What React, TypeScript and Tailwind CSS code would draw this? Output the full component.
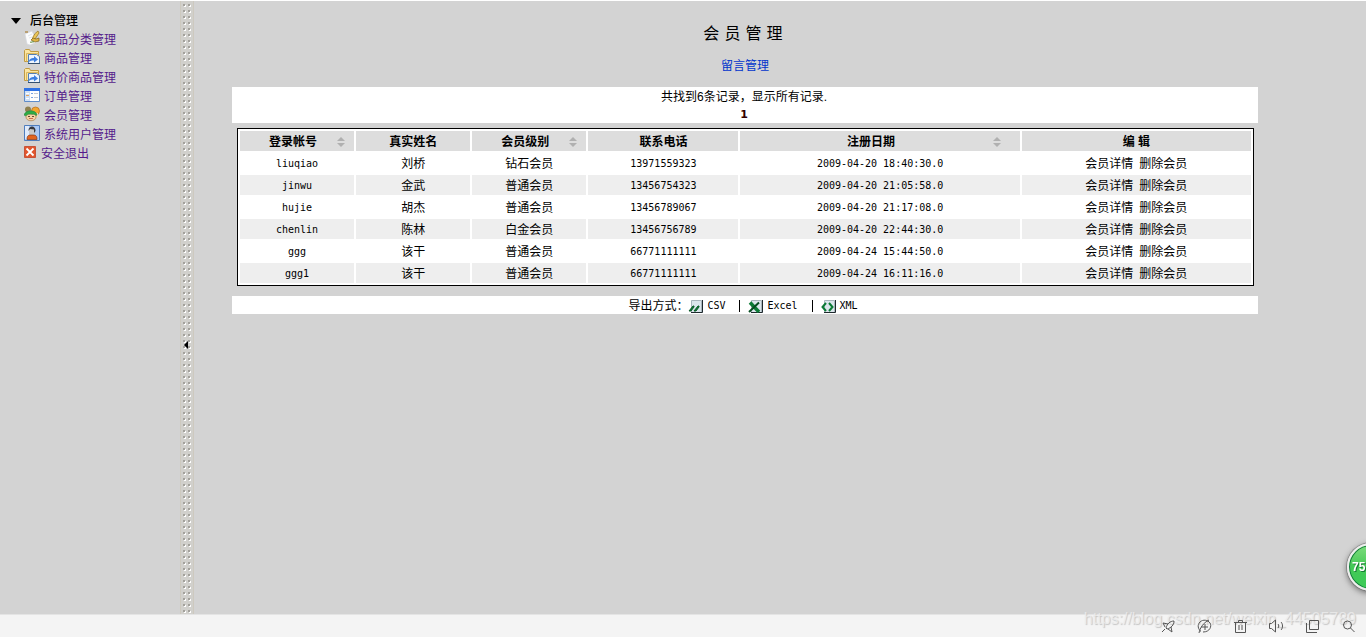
import { ReactNode } from 'react'

const members = [
  { account: 'liuqiao', name: '刘桥', level: '钻石会员', phone: '13971559323', date: '2009-04-20 18:40:30.0' },
  { account: 'jinwu', name: '金武', level: '普通会员', phone: '13456754323', date: '2009-04-20 21:05:58.0' },
  { account: 'hujie', name: '胡杰', level: '普通会员', phone: '13456789067', date: '2009-04-20 21:17:08.0' },
  { account: 'chenlin', name: '陈林', level: '白金会员', phone: '13456756789', date: '2009-04-20 22:44:30.0' },
  { account: 'ggg', name: '该干', level: '普通会员', phone: '66771111111', date: '2009-04-24 15:44:50.0' },
  { account: 'ggg1', name: '该干', level: '普通会员', phone: '66771111111', date: '2009-04-24 16:11:16.0' },
]

const columns = [
  { label: '登录帐号', width: 'w-[11.4%]', sort: 'pr-[9px]' },
  { label: '真实姓名', width: 'w-[11.4%]' },
  { label: '会员级别', width: 'w-[11.4%]', sort: 'pr-[9px]' },
  { label: '联系电话', width: 'w-[15%]' },
  { label: '注册日期', width: 'w-[27.9%]', sort: 'pr-[19px]' },
  { label: '编 辑', width: 'w-[22.9%]' },
]

const mono = "font-['DejaVu_Sans_Mono','Noto_Sans_CJK_SC',monospace] text-[10px]"
const cell = 'h-5 p-0 pt-[2px]'

function NoteIcon() {
  return (
    <svg width="16" height="16" viewBox="0 0 16 16">
      <path d="M1 4 8 1l5 11-7 3-3-1z" fill="#fcfcfc" stroke="#d5d9df" strokeWidth=".7" />
      <path d="M4 6l4-2M5 8l3-1" stroke="#dfe4ec" />
      <path d="M1 1h3v2H1z" fill="#b9a074" />
      <path d="M14 1c-2 1-4 4-5 6l-1 3 3-1 4-6z" fill="#ecc75a" stroke="#9a7a28" strokeWidth=".8" />
      <path d="M7 10l2-2 3 1 3-1v3l-4 1z" fill="#e0b545" stroke="#80631c" strokeWidth=".7" />
      <path d="M6 12c1 1 3-1 4 0" stroke="#5c8a3a" fill="none" />
    </svg>
  )
}

function FolderIcon() {
  return (
    <svg width="16" height="16" viewBox="0 0 16 16">
      <path d="M.5 12.500v-11l1-1h4l1 2h8v10z" fill="#fbe6a2" stroke="#c09a42" />
      <path d="M2.500 12.500v-8h12" fill="none" stroke="#d9b65e" />
      <path d="M4.500 5.500h8l3 2v7h-11z" fill="#eef5fd" stroke="#5480b5" />
      <path d="M5 13c0-3 2-4 5-4V7l4 3.500-4 3v-2c-2 0-4 0-5 1.500z" fill="#3c7fe0" />
      <path d="M4 14.500h12" stroke="#34506f" />
    </svg>
  )
}

function OrderIcon() {
  return (
    <svg width="16" height="14" viewBox="0 0 16 14">
      <path d="M.5.500h15v13H.5z" fill="#fff" stroke="#5f8cc9" />
      <path d="M0 0h16v3H0z" fill="#2f72e4" />
      <path d="M1 3h5v10H1z" fill="#cfe0f5" />
      <path d="M2 5.500h3M2 10.500h3" stroke="#fff" />
      <path d="M2 7.500h3" stroke="#e2a45a" />
      <path d="M7 5.500h2M7 9.500h2" stroke="#7ba4e4" />
      <path d="M10 5.500h4M10 9.500h4" stroke="#c4c9d2" />
    </svg>
  )
}

function MembersIcon() {
  return (
    <svg width="16" height="16" viewBox="0 0 16 16">
      <circle cx="11.500" cy="5" r="4" fill="#f3a52f" stroke="#b56a19" strokeWidth=".7" />
      <circle cx="4" cy="3.500" r="3" fill="#8f8150" />
      <path d="M10 7h4v3c0 2-2 2-4 1z" fill="#f6d7ad" />
      <path d="M2 8h10v3c0 5-10 5-10 0z" fill="#f5d3a5" stroke="#a87a4b" strokeWidth=".7" />
      <path d="M0 9c1-5 12-6 13 0-1 1-2 0-3-1-2 1-5-1-7 1-1 1-2 1-3 0z" fill="#2fac46" stroke="#25803a" strokeWidth=".5" />
      <path d="M4 10.500h2M8 10.500h2" stroke="#664a32" />
      <path d="M5 12.500h4" stroke="#c96a50" />
    </svg>
  )
}

function UserIcon() {
  return (
    <svg width="16" height="16" viewBox="0 0 16 16">
      <path d="M.5.500h15v15H.5z" fill="#a9c8f5" stroke="#4f7dbd" />
      <path d="M1 1h4v13H1z" fill="#dfeafb" />
      <path d="M5 4h6v4c-1 3-5 3-6 0z" fill="#c9c9c9" />
      <path d="M4.500 6C4 0 12 0 11.500 6L10 8V4.500L6 4z" fill="#36363b" />
      <path d="M3 14.500C3 10 5 10 8 10s5 0 5 4.500z" fill="#e2641f" stroke="#8b3712" strokeWidth=".7" />
    </svg>
  )
}

function ExitIcon() {
  return (
    <svg width="12" height="12" viewBox="0 0 12 12">
      <path d="M.5.500h11v11H.5z" fill="#e2562d" stroke="#c65238" />
      <path d="M2.500 2.500l7 7M9.500 2.500l-7 7" stroke="#fff" strokeWidth="1.800" />
    </svg>
  )
}

const menu = [
  { label: '商品分类管理', icon: <NoteIcon />, gap: 'gap-1' },
  { label: '商品管理', icon: <FolderIcon />, gap: 'gap-1' },
  { label: '特价商品管理', icon: <FolderIcon />, gap: 'gap-1' },
  { label: '订单管理', icon: <OrderIcon />, gap: 'gap-1' },
  { label: '会员管理', icon: <MembersIcon />, gap: 'gap-1' },
  { label: '系统用户管理', icon: <UserIcon />, gap: 'gap-1' },
  { label: '安全退出', icon: <ExitIcon />, gap: 'gap-[5px]' },
]

function Sidebar() {
  return (
    <aside className="w-[180px] shrink-0 pt-[10px]">
      <div className="flex h-[19px] items-center gap-[9px] pl-[11px] text-black">
        <svg width="10" height="6" viewBox="0 0 10 6"><path d="M0 0h10L5 6z" /></svg>
        <span className="font-medium">后台管理</span>
      </div>
      <nav className="pl-6">
        {menu.map(item => (
          <a key={item.label} href="#" className={`flex h-[19px] items-center text-[#551a8b] ${item.gap}`}>
            <span className="-mt-1">{item.icon}</span>
            <span>{item.label}</span>
          </a>
        ))}
      </nav>
    </aside>
  )
}

function Splitter() {
  return (
    <div className="relative w-[14px] shrink-0 border-x border-[#cdc9bf] bg-[#d1d0cc]">
      <svg className="absolute inset-0 h-full w-full">
        <defs>
          <pattern id="dots" width="5" height="6" x="2" y="3" patternUnits="userSpaceOnUse">
            <path d="M1 1h2v2H1z" fill="#fff" />
            <path d="M0 0h2v2H0z" fill="#a3a19b" />
          </pattern>
        </defs>
        <rect x="2" width="9" height="100%" fill="url(#dots)" />
      </svg>
      <button aria-label="收起菜单" className="absolute top-[340px] left-[2px] h-2 w-[6px]">
        <svg width="6" height="8" viewBox="0 0 6 8"><path d="M5 0v8L1 4z" /></svg>
      </button>
    </div>
  )
}

function SortIcon() {
  return (
    <svg width="8" height="10" viewBox="0 0 8 10" fill="#b0b0b0">
      <path d="M0 4h8L4 0zM0 6h8l-4 4z" />
    </svg>
  )
}

function MemberTable() {
  return (
    <table className="w-full table-fixed border-separate border-spacing-[2px] border border-black bg-white text-center">
      <colgroup>
        {columns.map(col => <col key={col.label} className={col.width} />)}
      </colgroup>
      <thead>
        <tr>
          {columns.map(col => (
            <th key={col.label} className={`bg-[#dddddd] font-bold ${cell}`}>
              {col.sort ? (
                <button className={`flex w-full items-center pl-[9px] ${col.sort}`}>
                  <span className="flex-1">{col.label}</span>
                  <SortIcon />
                </button>
              ) : col.label}
            </th>
          ))}
        </tr>
      </thead>
      <tbody>
        {members.map(m => (
          <tr key={m.account} className="even:bg-[#eeeeee]">
            <td className={`${cell} ${mono}`}>{m.account}</td>
            <td className={cell}>{m.name}</td>
            <td className={cell}>{m.level}</td>
            <td className={`${cell} ${mono}`}>{m.phone}</td>
            <td className={`${cell} ${mono}`}>{m.date}</td>
            <td className={cell}>
              <div className="flex justify-center gap-[6px]">
                <a href="#">会员详情</a>
                <a href="#">删除会员</a>
              </div>
            </td>
          </tr>
        ))}
      </tbody>
    </table>
  )
}

function ExportLink({ label, children }: { label: string; children: ReactNode }) {
  return (
    <a href="#" className={`flex items-center gap-1 ${mono}`}>
      <svg width="15" height="13" viewBox="0 0 15 13">
        <path d="M3.500.500h10v12h-10z" fill="#dbe6ec" stroke="#a8b5bc" />
        <path d="M14.500 0v12.500H3" fill="none" stroke="#1f2a2e" />
        {children}
      </svg>
      {label}
    </a>
  )
}

function ExportBar() {
  return (
    <div className="flex h-[18px] items-center justify-center bg-white pt-[2px] pr-1">
      <span>导出方式：</span>
      <ExportLink label="CSV">
        <path d="M5 6h1v1l-3 4H1zM10 6h1v1l-3 4H6z" fill="#0b7a35" stroke="#0b5a28" />
      </ExportLink>
      <span className="mr-2 ml-[14px] h-3 w-px bg-black" />
      <ExportLink label="Excel">
        <path d="M2 2.500 11 12" stroke="#0b7a35" strokeWidth="3.500" />
        <path d="M11 2.500 1 12" stroke="#064d20" strokeWidth="2" />
      </ExportLink>
      <span className="mr-2 ml-[14px] h-3 w-px bg-black" />
      <ExportLink label="XML">
        <path d="M5 3 1.500 7 5 11M8 3l3.500 4L8 11" fill="none" stroke="#0b7a35" strokeWidth="2" />
      </ExportLink>
    </div>
  )
}

const tools = [
  { label: '加速', art: <path d="M5 9C6 5 9 2 13 2c0 4-3 7-7 8zM7 5 2 4l2 4M10 8l1 5-4-3M4 10l-3 3" /> },
  { label: '内核', art: <path d="M4 12.500C1 10 0 6 3 3s8-2 10 1 0 9-7 9M2 14C3 9 6 4 12 1M4 8h7M8 5v6" /> },
  { label: '清理', art: <path d="M1 3.500h13M5.500 3V1.500h4V3M2.500 4v9.500h10V4M6 6v5M9 6v5" /> },
  { label: '声音', art: <path d="M.5 4.500h2L6.500 1v12l-4-3.500h-2zM9 5c1 1 1 3 0 4M12 3c2 2 2 6 0 8" /> },
  { label: '窗口', art: <path d="M4.500 1.500h9v9h-9zM1.500 4v9.500H12" /> },
  { label: '查找', art: <path d="M10.500 6a4 4 0 1 1-8 0 4 4 0 0 1 8 0zM9.500 9l4 4" /> },
]

function StatusBar() {
  return (
    <footer className="relative flex h-[23px] shrink-0 items-end justify-end border-t border-[#e4e4e4] bg-[#f4f4f4] pr-[10px]">
      <span className="pointer-events-none absolute right-[10px] bottom-2 font-['Liberation_Sans',sans-serif] text-base leading-5 text-[#eeeeee]/80 [text-shadow:1px_1px_1px_#c4c4c4]">
        https://blog.csdn.net/weixin_44505789
      </span>
      <div className="relative flex gap-[21px] pb-[3px]">
        {tools.map(tool => (
          <button key={tool.label} aria-label={tool.label}>
            <svg width="15" height="15" viewBox="0 0 15 15" fill="none" stroke="#555">{tool.art}</svg>
          </button>
        ))}
      </div>
    </footer>
  )
}

export default function App() {
  return (
    <div className="flex min-h-screen flex-col overflow-hidden border-t border-white bg-[#d3d3d3] font-['Liberation_Sans','Noto_Sans_CJK_SC',sans-serif] text-xs leading-[18px] text-black">
      <div className="flex flex-1">
        <Sidebar />
        <Splitter />
        <main className="flex-1 pt-[21px] pr-[108px] pl-[38px]">
          <h1 className="pr-1 text-center font-['DejaVu_Sans','Noto_Sans_CJK_SC',sans-serif] text-base leading-6">会 员 管 理</h1>
          <div className="mt-[11px] mb-3 text-center">
            <a href="#" className="text-[#0033cc]">留言管理</a>
          </div>
          <div className="h-9 bg-white pt-px pr-[2px] text-center">
            <p>共找到6条记录，显示所有记录.</p>
            <p className="font-['DejaVu_Sans',sans-serif] text-[11px] font-bold text-[#330000]">1</p>
          </div>
          <div className="pt-[5px] pr-1 pb-[10px] pl-[5px]">
            <MemberTable />
          </div>
          <ExportBar />
        </main>
      </div>
      <StatusBar />
      <div className="fixed right-[-29px] bottom-[46px] flex h-12 w-12 items-center rounded-full border-2 border-[#eeeeee] bg-linear-to-b from-[#7ddc7d] via-[#42c956] to-[#3ccb58] pl-[3px] text-xs font-bold text-white shadow-[0_2px_6px_#666,0_0_0_1px_#999,inset_0_0_0_1px_#147a3c] [text-shadow:1px_1px_0_#187a34]">
        75
      </div>
    </div>
  )
}
